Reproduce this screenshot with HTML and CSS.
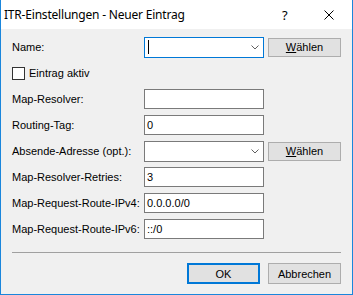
FILE: index.html
```html
<!DOCTYPE html>
<html>
<head>
<meta charset="utf-8">
<link rel="stylesheet" href="styles.css">
</head>
<body>
<div class="win">
  <div class="titlebar">
    <span class="title">ITR-Einstellungen - Neuer Eintrag</span>
    <span class="help">?</span>
    <span class="close"><svg width="10" height="10" viewBox="0 0 10 10"><path d="M0.5 0.5 L9.5 9.5 M9.5 0.5 L0.5 9.5" stroke="#000" stroke-width="1" fill="none"/></svg></span>
  </div>
  <div class="body">
    <div class="row">
      <span class="lbl">Name:</span>
      <div class="field combo focused"><span class="caret"></span><svg class="chev" width="8" height="5" viewBox="0 0 8 5"><path d="M0.5 0.5 L4 4 L7.5 0.5" stroke="#606060" fill="none"/></svg></div>
      <button class="btn pick"><u>W</u>ählen</button>
    </div>
    <div class="row">
      <span class="check"></span><span class="chklbl">Eintrag aktiv</span>
    </div>
    <div class="row">
      <span class="lbl">Map-Resolver:</span>
      <div class="field"></div>
    </div>
    <div class="row">
      <span class="lbl">Routing-Tag:</span>
      <div class="field">0</div>
    </div>
    <div class="row">
      <span class="lbl">Absende-Adresse (opt.):</span>
      <div class="field combo"><span></span><svg class="chev" width="8" height="5" viewBox="0 0 8 5"><path d="M0.5 0.5 L4 4 L7.5 0.5" stroke="#606060" fill="none"/></svg></div>
      <button class="btn pick"><u>W</u>ählen</button>
    </div>
    <div class="row">
      <span class="lbl">Map-Resolver-Retries:</span>
      <div class="field">3</div>
    </div>
    <div class="row">
      <span class="lbl">Map-Request-Route-IPv4:</span>
      <div class="field">0.0.0.0/0</div>
    </div>
    <div class="row">
      <span class="lbl">Map-Request-Route-IPv6:</span>
      <div class="field">::/0</div>
    </div>
  </div>
  <div class="sep"></div>
  <div class="actions">
    <button class="btn ok">OK</button>
    <button class="btn">Abbrechen</button>
  </div>
</div>
</body>
</html>
```

FILE: styles.css
```css
html, body {
  margin: 0;
  padding: 0;
  background: #ffffff;
}
body {
  font-family: "Liberation Sans", Arial, sans-serif;
  font-size: 11px;
  color: #000;
}
.win {
  width: 353px;
  height: 295px;
  box-sizing: border-box;
  border: 1px solid #1a86dc;
  border-top: none;
  background: #f0f0f0;
  display: flex;
  flex-direction: column;
}
.titlebar {
  height: 29px;
  background: #ffffff;
  display: flex;
  align-items: center;
  padding-left: 3px;
  font-family: "Noto Sans", "Open Sans", sans-serif;
  font-size: 12px;
}
.title {
  flex: 1;
  letter-spacing: -0.2px;
}
.help {
  width: 14px;
  margin-right: 28px;
  font-size: 13px;
}
.close {
  width: 10px;
  height: 10px;
  margin-right: 18px;
  display: flex;
}
.body {
  padding: 8px 11px 0 11px;
  display: flex;
  flex-direction: column;
}
.row {
  display: flex;
  align-items: center;
  height: 20px;
  margin-bottom: 6px;
}
.lbl {
  width: 132px;
  flex: none;
}
.field {
  width: 120px;
  height: 20px;
  box-sizing: border-box;
  border: 1px solid #7a7a7a;
  background: #fff;
  padding-left: 2px;
  line-height: 18px;
  flex: none;
}
.combo {
  height: 21px;
  display: flex;
  align-items: center;
  justify-content: space-between;
  padding-right: 4px;
}
.combo.focused {
  border-color: #0078d7;
}
.caret {
  width: 1px;
  height: 14px;
  background: #000;
  margin-left: 1px;
}
.chev {
  display: block;
}
.btn {
  width: 73px;
  height: 19px;
  box-sizing: border-box;
  border: 1px solid #adadad;
  background: #e1e1e1;
  font-family: "Liberation Sans", Arial, sans-serif;
  font-size: 11px;
  color: #000;
  padding: 0;
  text-align: center;
}
.pick {
  margin-left: 4px;
}
.check {
  width: 13px;
  height: 13px;
  box-sizing: border-box;
  border: 1px solid #333;
  background: #fff;
  margin-right: 4px;
  margin-left: 0;
}
.sep {
  height: 1px;
  background: #a0a0a0;
  margin: 7px 11px 0 11px;
}
.actions {
  display: flex;
  justify-content: flex-end;
  gap: 8px;
  padding: 10px 11px 0 0;
}
.actions .btn {
  height: 21px;
}
.ok {
  border: 2px solid #0078d7;
}
```
